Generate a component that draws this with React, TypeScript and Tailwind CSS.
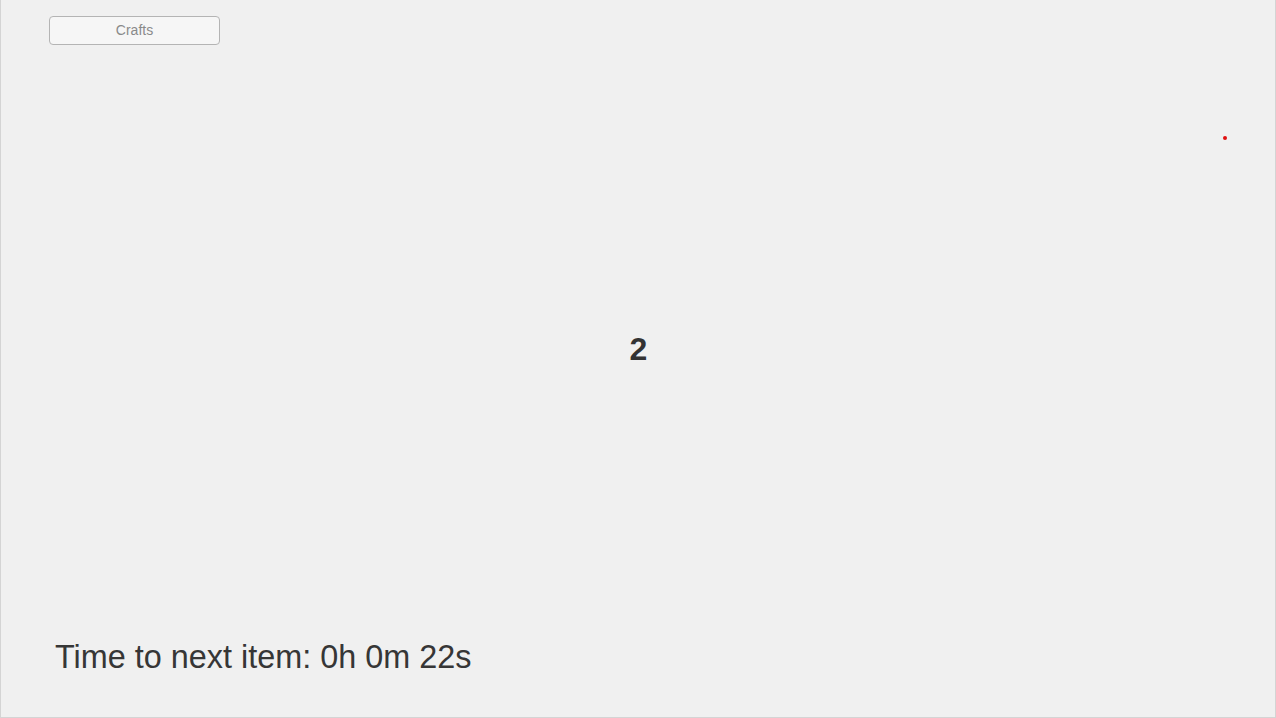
import React from "react";

export default function App() {
  return (
    <div
      className="relative w-[1276px] h-[718px] bg-[#f0f0f0] border-l border-r border-b border-[#d4d4d4] flex flex-col"
      style={{ fontFamily: '"Liberation Sans", Arial, sans-serif' }}
    >
      <div className="pl-[48px] pt-[16px]">
        <button className="w-[171px] h-[29px] rounded-[4px] border border-[#b4b4b4] bg-[#f6f6f6] text-[14px] text-[#8a8a8a] flex items-center justify-center">
          Crafts
        </button>
      </div>
      <div className="flex-1 flex items-center justify-center">
        <span className="text-[32px] font-bold text-[#333333] leading-none mt-[12px] ml-[1px]">2</span>
      </div>
      <div className="pl-[54px] pb-[44px] text-[32.4px] leading-none text-[#363636]">
        Time to next item: 0h 0m 22s
      </div>
      <div className="absolute left-[1222px] top-[136px] w-[4px] h-[4px] rounded-full bg-[#e01010]" />
    </div>
  );
}
